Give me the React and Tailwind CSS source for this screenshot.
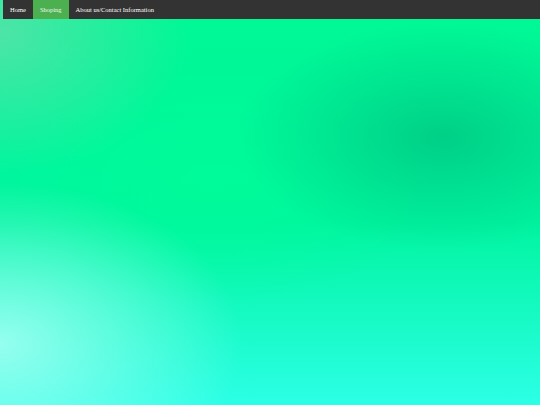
import React from "react";

const links = [
    { label: "Home", active: false },
    { label: "Shoping", active: true },
    { label: "About us/Contact Information", active: false },
];

const App = () => {
    return (
        <div className="min-h-screen w-full font-['Liberation_Serif',serif] bg-[radial-gradient(ellipse_38%_28%_at_82%_34%,rgba(0,170,115,0.5),transparent),radial-gradient(ellipse_45%_40%_at_0%_85%,rgba(170,255,245,0.85),transparent),radial-gradient(ellipse_35%_35%_at_0%_8%,rgba(110,220,175,0.7),transparent),radial-gradient(ellipse_40%_30%_at_40%_45%,rgba(0,255,150,0.6),transparent),linear-gradient(to_bottom,#00f894,#00f5a0_55%,#2cffe6)]">
            <ul className="ml-[3px] flex bg-[#333333] overflow-hidden">
                {links.map((link) => (
                    <li key={link.label}>
                        <a
                            href="#"
                            className={
                                link.active
                                    ? "block px-[7px] py-[6px] text-[6.5px] leading-[1.15] text-[#eef8ee] bg-[#4caf50]"
                                    : "block px-[7px] py-[6px] text-[6.5px] leading-[1.15] text-white"
                            }
                        >
                            {link.label}
                        </a>
                    </li>
                ))}
            </ul>
        </div>
    );
};

export default App;
